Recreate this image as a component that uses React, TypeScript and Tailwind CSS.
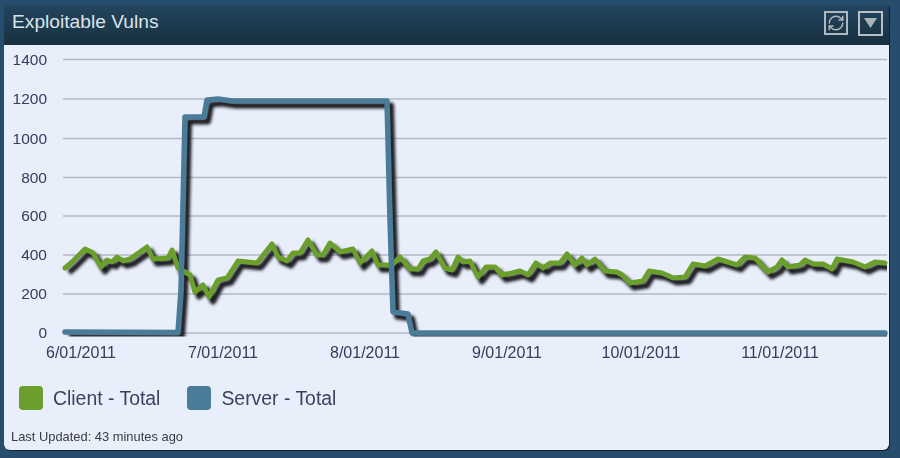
import { RefreshCw } from "lucide-react";

const GREEN = "65,268 72,262 85,249 93,253 101,267 107,260 112,262 117,257 123,261 130,259 147,247 153,259 168,258 172,250 178,268 190,275 195,292 203,285 209,297 218,280 227,278 238,261 257,263 272,244 278,257 287,261 293,253 300,253 308,240 317,255 323,255 330,243 340,252 353,249 360,263 372,251 378,265 392,265 400,257 410,269 418,269 423,261 430,259 436,252 445,268 452,270 458,257 463,262 470,261 478,277 486,267 495,267 502,275 512,273 520,271 528,275 536,263 543,268 550,263 560,263 567,254 575,265 582,258 587,265 595,259 605,271 617,272 622,275 630,283 643,281 649,271 662,273 673,278 685,277 693,264 705,266 718,259 737,265 745,257 755,258 768,272 777,267 782,260 788,267 800,265 805,260 813,264 823,264 832,269 837,259 853,262 865,267 875,262 885,263";
const BLUE = "65,332 178,332.5 181,290 185,117 204,117 207,100 218,99 232,101 387,101 390,220 393,312 408,314 412,333 885,333";

const Y_TICKS = [
  { label: "1400", y: 59.5 },
  { label: "1200", y: 99 },
  { label: "1000", y: 138.5 },
  { label: "800", y: 177.5 },
  { label: "600", y: 216 },
  { label: "400", y: 255 },
  { label: "200", y: 294 },
  { label: "0", y: 333 },
];

const X_TICKS = [
  { label: "6/01/2011", x: 81 },
  { label: "7/01/2011", x: 223 },
  { label: "8/01/2011", x: 365 },
  { label: "9/01/2011", x: 507 },
  { label: "10/01/2011", x: 641 },
  { label: "11/01/2011", x: 780 },
];

function Chart() {
  return (
    <svg viewBox="4 45 885 329" className="block w-[885px] h-[329px] shrink-0">
      <defs>
        <filter id="soft" x="-5%" y="-5%" width="110%" height="110%">
          <feGaussianBlur stdDeviation="1.4" />
        </filter>
        <clipPath id="plot">
          <rect x="60" y="50" width="827" height="286.5" />
        </clipPath>
      </defs>
      {Y_TICKS.map((t) => (
        <g key={t.label}>
          <line x1="63" x2="887" y1={t.y} y2={t.y} stroke="#b4b8c4" strokeWidth="1.3" />
          <text x="47" y={t.y + 5} textAnchor="end" fontSize="15.5" fill="#3a3a5a">
            {t.label}
          </text>
        </g>
      ))}
      {X_TICKS.map((t) => (
        <text key={t.label} x={t.x} y="358" textAnchor="middle" fontSize="16" fill="#3a3a5a">
          {t.label}
        </text>
      ))}
      {/* shadows, cut off at the plot edge */}
      <g clipPath="url(#plot)">
        <g transform="translate(4 4.5)" filter="url(#soft)" fill="none" stroke="#1f1f24" strokeWidth="6" strokeLinejoin="round">
          <polyline points={GREEN} />
          <polyline points={BLUE} />
        </g>
      </g>
      <polyline points={GREEN} fill="none" stroke="#6b9f2c" strokeWidth="5" strokeLinejoin="round" strokeLinecap="round" />
      <polyline points={BLUE} fill="none" stroke="#4a7b99" strokeWidth="5.5" strokeLinejoin="round" strokeLinecap="round" />
    </svg>
  );
}

export default function App() {
  return (
    <div
      className="w-[900px] h-[458px] overflow-hidden bg-[#274d6e] pt-[5px] pl-[4px]"
      style={{ fontFamily: '"Liberation Sans", Arial, sans-serif' }}
    >
      <div className="w-[885px] h-[445px] flex flex-col rounded-b-md overflow-hidden shadow-[1px_1px_0_#14202c] blur-[0.4px]">
        <header className="h-[40px] shrink-0 flex items-center justify-between pl-[8px] pr-[6px] pb-[4px] bg-gradient-to-b from-[#234560] to-[#18303f]">
          <h1 className="text-[19.2px] font-normal text-[#dde4e8] -mt-[1px]">Exploitable Vulns</h1>
          <div className="flex items-center gap-[10px]">
            <button className="w-[24px] h-[24px] border-2 border-[#aeb8bf] flex items-center justify-center">
              <RefreshCw size={18} strokeWidth={2} className="text-[#aeb8bf]" />
            </button>
            <button className="w-[25px] h-[25px] border-2 border-[#b8c0c6] flex items-center justify-center">
              <svg viewBox="0 0 13 10" className="w-[13px] h-[10px]">
                <polygon points="0,0 13,0 6.5,10" fill="#aab3b9" />
              </svg>
            </button>
          </div>
        </header>
        <main className="flex-1 flex flex-col bg-[#e8eefa]">
          <Chart />
          <div className="flex items-center mt-[12px] pl-[15px] gap-[27px] text-[19.4px] leading-[24px] text-[#3f3f5f]">
            <div className="flex items-center gap-[10px]">
              <span className="w-[24px] h-[24px] rounded bg-[#6b9f2c]" />
              <span>Client - Total</span>
            </div>
            <div className="flex items-center gap-[10px]">
              <span className="w-[24px] h-[24px] rounded bg-[#4a7b99]" />
              <span>Server - Total</span>
            </div>
          </div>
          <p className="mt-[20px] pl-[7px] text-[12.9px] leading-[14px] text-[#3a3a4a]">
            Last Updated: 43 minutes ago
          </p>
        </main>
      </div>
    </div>
  );
}
